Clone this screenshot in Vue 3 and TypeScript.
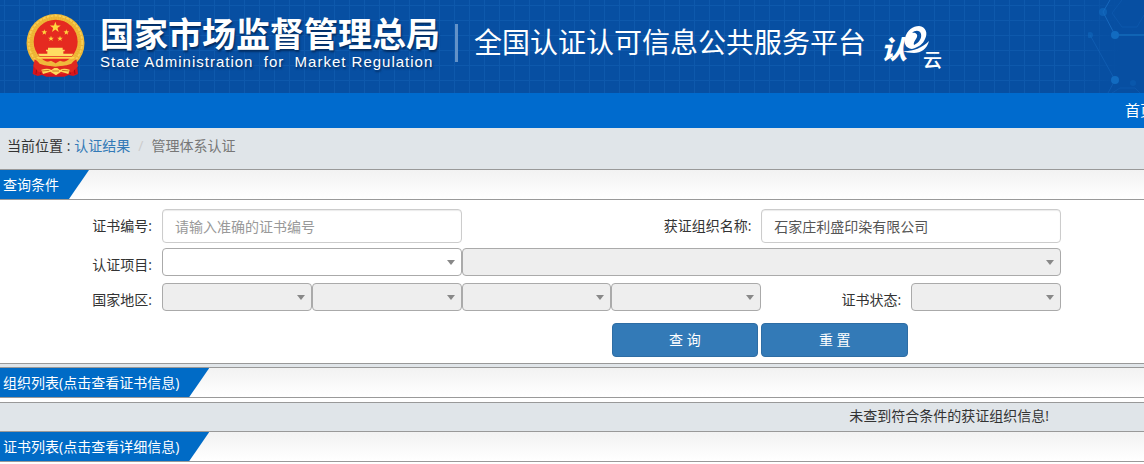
<script setup lang="ts">
import { ref } from 'vue'

const certNo = ref('')
const orgName = ref('石家庄利盛印染有限公司')
const regions = ['国家地区', '省', '市', '区县']

const star = (cx: number, cy: number, r: number): string =>
  Array.from({ length: 10 }, (_, i) => {
    const a = (Math.PI / 5) * i - Math.PI / 2
    const d = i % 2 ? r * 0.4 : r
    return `${(cx + d * Math.cos(a)).toFixed(1)},${(cy + d * Math.sin(a)).toFixed(1)}`
  }).join(' ')

const stars = [
  star(166, 82, 17),
  star(133, 97, 9),
  star(199, 97, 9),
  star(153, 116, 9),
  star(180, 116, 9),
]

function reset() {
  certNo.value = ''
  orgName.value = ''
}
</script>

<template>
  <div class="page">
    <header class="banner">
      <svg class="network" viewBox="0 0 56 93" aria-hidden="true">
        <g fill="none" stroke="#1768bd" stroke-width="1">
          <path d="M22 0 15 12 27 35" />
          <path d="M2 35 27 80 20 93" opacity=".5" />
          <path d="M27 35H56" stroke="#1b7ac6" />
          <path d="M34 0 24 13 34 27H49L56 15M24 93 32 88H47L52 93" opacity=".35" />
        </g>
        <g fill="#126bc0">
          <circle cx="15" cy="12" r="4" opacity=".6" />
          <circle cx="27" cy="35" r="4" />
          <circle cx="2" cy="35" r="3" opacity=".5" />
          <circle cx="27" cy="80" r="4" />
          <circle cx="45" cy="83" r="3" opacity=".3" />
        </g>
      </svg>
      <svg class="emblem" viewBox="78 42 177 189" role="img" aria-label="国徽">
        <path d="M103 174 98 222 113 228 126 225 139 230H193L206 225 220 228 234 222 229 174Z" fill="#d9151b" />
        <path d="M113 184 108 222M219 184 225 222M126 190 122 222M207 190 211 222" stroke="#9f1016" stroke-width="3" />
        <circle cx="166.500" cy="129" r="87" fill="#efb937" />
        <circle cx="166.500" cy="128" r="76" fill="none" stroke="#e0a02c" stroke-width="15" stroke-dasharray="2 5" opacity=".45" />
        <circle cx="166.500" cy="127" r="80" fill="none" stroke="#f9cf55" stroke-width="5" stroke-dasharray="8 4" />
        <circle cx="167" cy="125" r="66" fill="#e52a20" />
        <polygon v-for="points in stars" :key="points" :points="points" fill="#ffd63f" />
        <path d="M144 143H188V149H194V154H190V161H220L215 169H119L114 161H142V154H138V149H144Z" fill="#ffdc62" />
        <path d="M109 171H225L220 176H114Z" fill="#ffd34e" />
        <path d="M104 178Q136 200 166 200T229 178L234 199 217 216 187 222H148L116 216 100 199Z" fill="#e02920" />
        <path d="M106 176Q134 190 153 182L167 190 180 182Q200 190 227 176L214 191Q198 198 181 197L167 191 153 197Q134 198 119 191Z" fill="#f0b93c" />
        <path d="M124 209Q144 203 154 210L163 204H172L180 210Q190 203 209 209L205 222 183 215 168 226 151 215 129 222Z" fill="#ffda5c" />
        <path d="M126 213 148 211M186 211 206 213M157 213H177" stroke="#cc7720" stroke-width="3" />
      </svg>
      <div class="agency">
        <h1>国家市场监督管理总局</h1>
        <p>State Administration&nbsp; for&nbsp; Market Regulation</p>
      </div>
      <span class="divider"></span>
      <h2>全国认证认可信息公共服务平台</h2>
      <svg class="cloud" viewBox="0 0 72 56" role="img" aria-label="认e云">
        <text x="0" y="34" class="cloud-main">认</text>
        <path fill-rule="evenodd" d="M31 24C24 23 23 18 24 13 26 5 32 1 38 1 45 2 47 8 44 14 42 19 38 22 31 24ZM33 20C38 18 41 13 40 9 39 5 34 5 31 8 34 7 37 9 36 12 35 15 32 17 33 20Z" />
        <path d="M20 26C30 27 40 24 48 16 46 24 40 28 33 28 28 28 25 27 20 26Z" />
        <text x="42" y="42" class="cloud-sub">云</text>
      </svg>
    </header>

    <nav class="menu"><a href="#">首页</a></nav>

    <div class="crumbs">
      <span>当前位置 :</span>
      <a href="#">认证结果</a>
      <span class="slash">/</span>
      <span class="current">管理体系认证</span>
    </div>

    <section>
      <div class="head"><h3>查询条件</h3></div>
      <form class="search" @submit.prevent>
        <div class="row">
          <label for="cert-no">证书编号:</label>
          <input id="cert-no" v-model="certNo" class="span2" type="text" placeholder="请输入准确的证书编号" />
          <label for="org-name" class="span2">获证组织名称:</label>
          <input id="org-name" v-model="orgName" class="span2" type="text" />
        </div>
        <div class="row project">
          <label for="project">认证项目:</label>
          <span class="pick span2"><select id="project"></select></span>
          <span class="pick span4"><select aria-label="认证项目类别" disabled></select></span>
        </div>
        <div class="row region">
          <label for="region-0">国家地区:</label>
          <span v-for="(name, i) in regions" :key="name" class="pick">
            <select :id="`region-${i}`" :aria-label="name" disabled></select>
          </span>
          <label for="status">证书状态:</label>
          <span class="pick"><select id="status" disabled></select></span>
        </div>
        <div class="row actions">
          <button type="submit">查 询</button>
          <button type="button" @click="reset">重 置</button>
        </div>
      </form>
    </section>

    <section class="orgs">
      <div class="head"><h3>组织列表(点击查看证书信息)</h3></div>
      <p class="empty">未查到符合条件的获证组织信息!</p>
    </section>

    <section>
      <div class="head"><h3>证书列表(点击查看详细信息)</h3></div>
    </section>
  </div>
</template>

<style>
body {
  margin: 0;
  background: #fff;
}
</style>

<style scoped>
.page {
  overflow: hidden;
  color: #333;
  font: 14px/20px "Open Sans", "Noto Sans CJK SC", sans-serif;
}
.page * {
  box-sizing: border-box;
}
h1, h2, h3, p {
  margin: 0;
  font-weight: 400;
}
a {
  color: #337ab7;
  text-decoration: none;
}
.banner {
  position: relative;
  display: flex;
  align-items: flex-start;
  height: 93px;
  padding-left: 26px;
  color: #fff;
  white-space: nowrap;
  background:
    linear-gradient(90deg, transparent calc(100% - 70px), #074fa2 calc(100% - 25px)),
    repeating-linear-gradient(90deg, transparent 0 4px, #0e59ac 4px 5px, transparent 5px 15px),
    repeating-linear-gradient(180deg, transparent 0 5px, #0e59ac 5px 6px, transparent 6px 15px),
    #074fa2;
}
.network {
  position: absolute;
  top: 0;
  right: 0;
  width: 56px;
  height: 93px;
}
.emblem {
  flex: none;
  width: 59px;
  height: 63px;
  margin-top: 14px;
}
.agency {
  width: 340px;
  margin: 16px 0 0 15px;
  text-shadow: 1px 2px 2px #032c60;
}
.agency h1 {
  font-size: 34px;
  font-weight: 700;
  line-height: 36px;
}
.agency p {
  font: 15px/20px "Liberation Sans", Arial, sans-serif;
  letter-spacing: 1px;
}
.divider {
  flex: none;
  width: 3px;
  height: 38px;
  margin: 24px 16px 0 15px;
  background: #6392c8;
}
.banner h2 {
  margin-top: 22px;
  font-size: 28px;
  line-height: 40px;
}
.cloud {
  flex: none;
  width: 72px;
  height: 56px;
  margin: 25px 0 0 15px;
  fill: #fff;
}
.cloud-main {
  font: italic 900 26px "Noto Sans CJK SC", sans-serif;
}
.cloud-sub {
  font: 500 19px "Noto Sans CJK SC", sans-serif;
}
.menu {
  display: flex;
  justify-content: flex-end;
  background: #006bce;
}
.menu a {
  margin-right: -11px;
  color: #fff;
  font-size: 15px;
  line-height: 35px;
}
.crumbs {
  display: flex;
  height: 41px;
  padding: 8px 7px;
  background: #e0e5e9;
}
.crumbs a {
  margin-left: 4px;
}
.slash {
  margin: 0 8px;
  color: #ccc;
}
.current {
  color: #777;
}
.head {
  display: flex;
  border: solid #999;
  border-width: 1px 0;
  background: linear-gradient(#f2f2f2, #fff);
}
.head h3 {
  padding: 0 30px 0 3px;
  color: #fff;
  font-size: 14px;
  line-height: 29px;
  background: #006bc6;
  clip-path: polygon(0 0, 100% 0, calc(100% - 20px) 100%, 0 100%);
}
.search {
  padding: 9px 83px 6px 0;
}
.row {
  display: grid;
  grid-template-columns: 162px repeat(6, minmax(0, 1fr));
}
.span2 {
  grid-column: span 2;
}
.span4 {
  grid-column: span 4;
}
label {
  padding: 7px 10px 0 0;
  text-align: right;
}
input {
  width: 100%;
  height: 34px;
  padding: 6px 12px;
  border: 1px solid #ccc;
  border-radius: 4px;
  color: #555;
  font: inherit;
  background: #fff;
  box-shadow: inset 0 1px 1px rgba(0, 0, 0, .08);
}
input::placeholder {
  color: #999;
  opacity: 1;
}
.project {
  margin-top: 5px;
}
.region {
  margin-top: 7px;
}
.pick {
  position: relative;
}
.pick::after {
  position: absolute;
  top: 12px;
  right: 7px;
  border: 4px solid transparent;
  border-top: 5px solid #888;
  border-bottom: 0;
  content: "";
  pointer-events: none;
}
select {
  display: block;
  width: 100%;
  height: 28px;
  border: 1px solid #aaa;
  border-radius: 4px;
  font: inherit;
  background: #fff;
  appearance: none;
}
select:disabled {
  background: #eee;
  opacity: 1;
}
.actions {
  margin-top: 12px;
}
button {
  height: 34px;
  margin-right: 3px;
  padding: 0;
  border: 1px solid #2e6da4;
  border-radius: 4px;
  color: #fff;
  font: inherit;
  background: #337ab7;
}
button:first-child {
  grid-column-start: 5;
}
.orgs {
  padding-top: 3px;
  border-top: 1px solid #999;
  background: #e0e5e9;
}
.empty {
  padding: 3px 95px 5px 0;
  border-top: 1px solid #999;
  text-align: right;
}
.orgs .head {
  box-shadow: 0 4px #fff;
  margin-bottom: 4px;
}
</style>
